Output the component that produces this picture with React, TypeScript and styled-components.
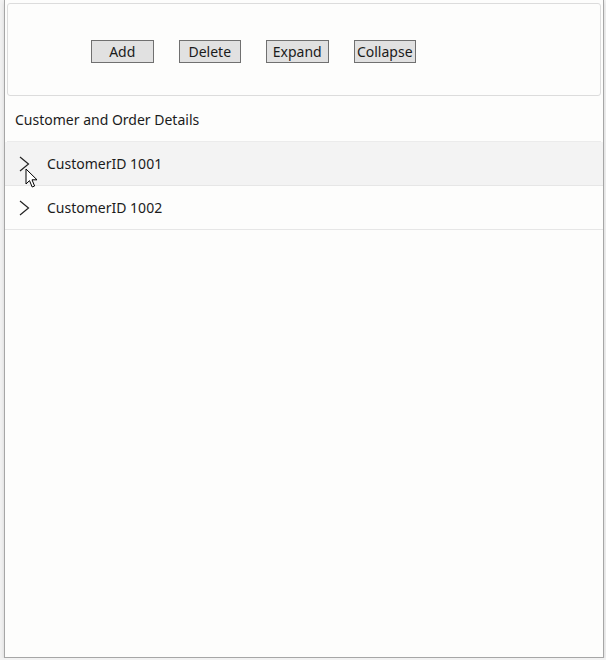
import { FC } from 'react'
import styled, { createGlobalStyle } from 'styled-components'

const GlobalStyle = createGlobalStyle`
  html, body {
    margin: 0;
    padding: 0;
    background: #f2f2f2;
  }
  body {
    font-family: 'Noto Sans', 'Open Sans', 'Liberation Sans', sans-serif;
    color: #1b1b1b;
  }
`

const buttons = ['Add', 'Delete', 'Expand', 'Collapse']

const customers = [
  { id: 1001, hover: true },
  { id: 1002, hover: false },
]

const Chevron: FC = () => (
  <ChevronSvg width="11" height="16" viewBox="0 0 11 16">
    <path d="M1 1 L9.5 8 L1 15" fill="none" stroke="#222" strokeWidth="1.2" />
  </ChevronSvg>
)

const Cursor: FC = () => (
  <CursorSvg width="14" height="21" viewBox="0 0 14 21">
    <path
      d="M1 1 L1 16 L4.5 12.6 L7.2 19 L9.6 18 L7 11.8 L12 11.8 Z"
      fill="#fff"
      stroke="#000"
      strokeWidth="1"
      strokeLinejoin="round"
    />
  </CursorSvg>
)

const App: FC = () => {
  return (
    <>
      <GlobalStyle />
      <Window>
        <GroupBox>
          <ButtonRow>
            {buttons.map((b) => (
              <ToolButton key={b}>{b}</ToolButton>
            ))}
          </ButtonRow>
        </GroupBox>
        <Header>Customer and Order Details</Header>
        <TreeList>
          {customers.map((c) => (
            <TreeRow key={c.id} $hover={c.hover}>
              <Chevron />
              <RowLabel>CustomerID {c.id}</RowLabel>
              {c.hover && <Cursor />}
            </TreeRow>
          ))}
        </TreeList>
      </Window>
    </>
  )
}

export default App

const Window = styled.div`
  box-sizing: border-box;
  margin-left: 4px;
  width: 600px;
  height: 658px;
  background: #fdfdfc;
  border-left: 1px solid #a6a6a6;
  border-right: 1px solid #a6a6a6;
  border-bottom: 1px solid #a6a6a6;
  box-shadow: 0 2px 4px rgba(0, 0, 0, 0.12);
  padding: 3px 2px 0 2px;
  display: flex;
  flex-direction: column;
`

const GroupBox = styled.div`
  box-sizing: border-box;
  height: 93px;
  border: 1px solid #dcdcdc;
  border-radius: 3px;
  padding: 36px 0 0 83px;
`

const ButtonRow = styled.div`
  display: flex;
  gap: 25px;
`

const ToolButton = styled.button`
  box-sizing: border-box;
  width: 62.5px;
  height: 23px;
  padding: 0;
  background: #e1e1e1;
  border: 1px solid #707070;
  border-radius: 0;
  font-family: inherit;
  font-size: 14px;
  color: #1b1b1b;
  line-height: 20px;
`

const Header = styled.div`
  height: 46px;
  padding: 2px 0 0 8px;
  box-sizing: border-box;
  display: flex;
  align-items: center;
  font-size: 14px;
  border-bottom: 1px solid #ebebeb;
`

const TreeList = styled.div`
  display: flex;
  flex-direction: column;
  margin: 0 -2px;
`

const TreeRow = styled.div<{ $hover?: boolean }>`
  position: relative;
  box-sizing: border-box;
  height: 44px;
  display: flex;
  align-items: center;
  padding-left: 14px;
  background: ${({ $hover }) => ($hover ? '#f3f3f3' : 'transparent')};
  border-bottom: 1px solid #e6e6e6;
`

const ChevronSvg = styled.svg`
  flex: none;
`

const RowLabel = styled.span`
  margin-left: 17px;
  font-size: 14px;
`

const CursorSvg = styled.svg`
  position: absolute;
  left: 20px;
  top: 26px;
`
